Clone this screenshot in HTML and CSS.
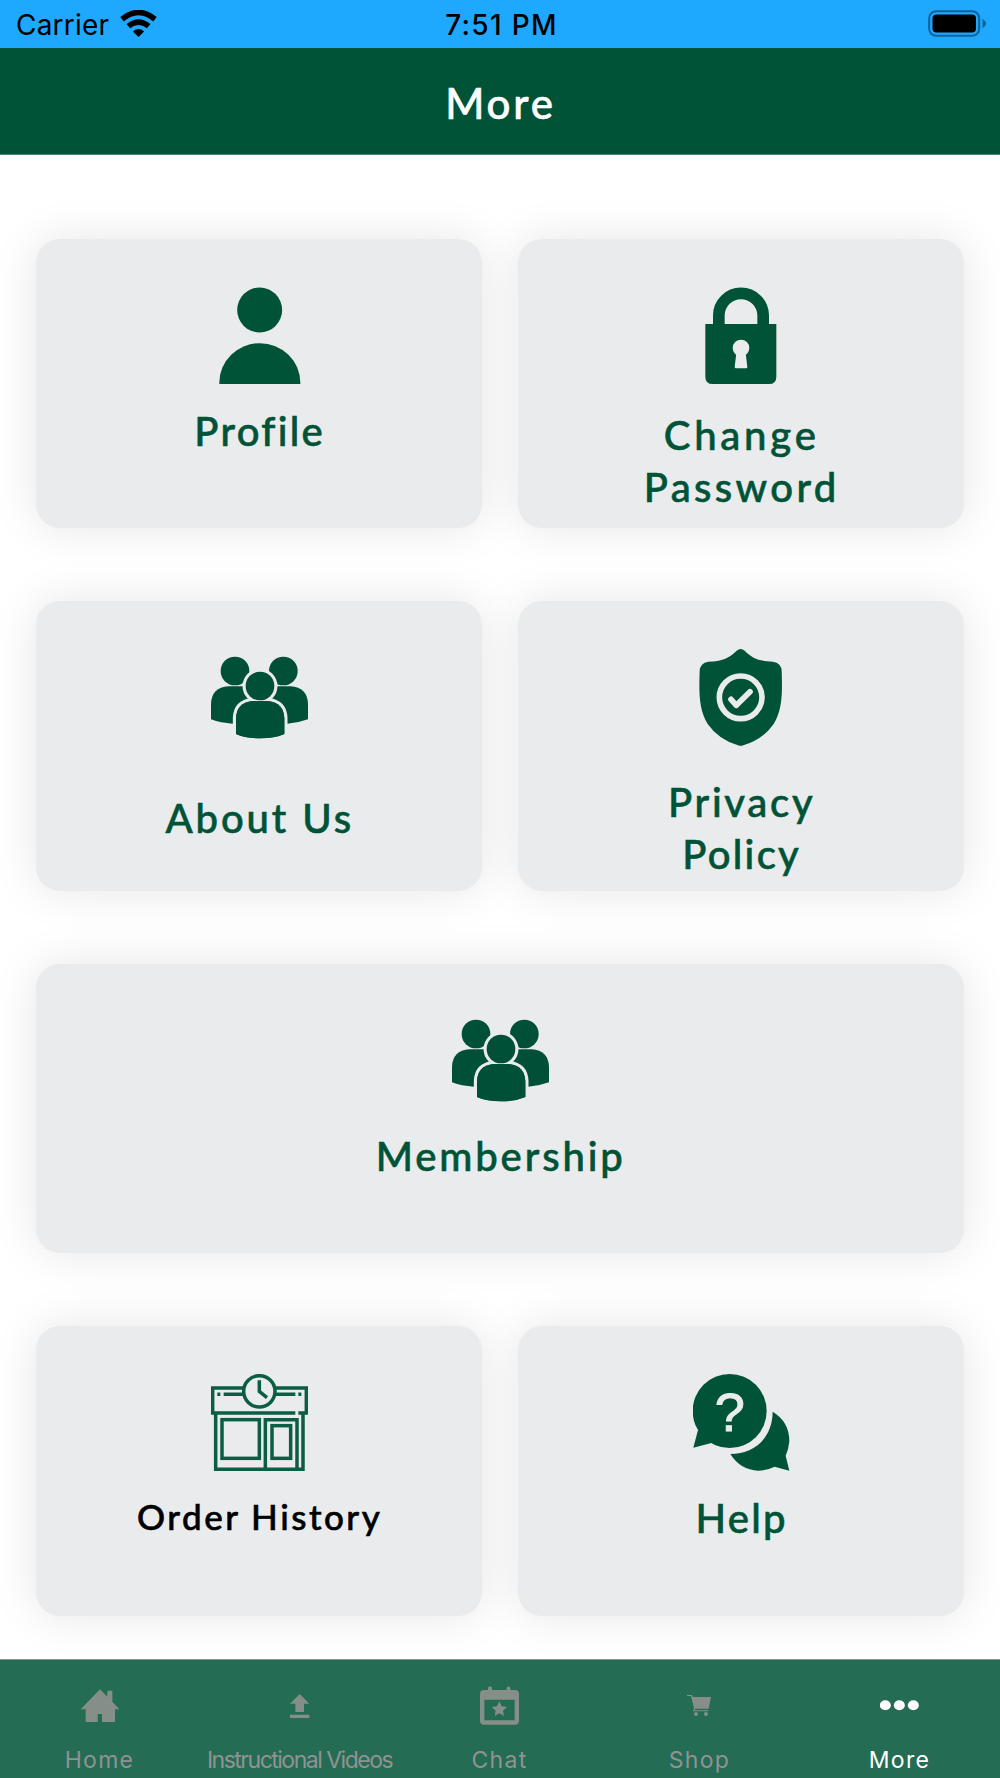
FILE: index.html
```html
<!DOCTYPE html>
<html lang="en">
<head>
    <meta charset="UTF-8">
    <meta name="viewport" content="width=device-width, initial-scale=1.0">
    <title>More</title>
    <link rel="stylesheet" href="styles.css">
</head>
<body>
    <!-- people icon, used on two cards -->
    <svg class="symbols" width="0" height="0">
        <symbol id="people" viewBox="0 0 291 291">
            <g fill="#005037">
                <circle cx="72" cy="66" r="43"/>
                <circle cx="217" cy="66" r="43"/>
                <path d="M52 112H100L130 150L65 224Q30 222 0 211V164Q2 116 52 112Z"/>
                <path d="M239 112H191L161 150L229 224Q261 222 291 211V164Q289 116 239 112Z"/>
            </g>
            <g fill="#005037" stroke="#e9ebec" stroke-width="19" paint-order="stroke">
                <path d="M75 255V207Q77 162 124 156H171Q218 162 220 207V255Q190 268 148 268Q105 268 75 255Z"/>
                <circle cx="147" cy="111" r="43"/>
            </g>
            <path fill="#005037" d="M75 255V207Q77 162 124 156H171Q218 162 220 207V255Q190 268 148 268Q105 268 75 255Z"/>
        </symbol>
    </svg>
    <div class="status">
        <div class="carrier">
            <span>Carrier</span>
            <svg class="wifi" viewBox="0 0 110 82">
                <g fill="none" stroke="#000" stroke-width="17">
                    <path d="M5 28Q55 -13 105 28"/>
                    <path d="M24 49Q55 24 86 49"/>
                </g>
                <path d="M38 65Q55 51 72 65L55 82Z"/>
            </svg>
        </div>
        <div class="time">7:51 PM</div>
        <div class="power">
            <svg class="battery" viewBox="0 0 59 28">
                <rect x="1.2" y="1.2" width="50" height="24.6" rx="7" fill="none" stroke="#0f6199" stroke-width="2"/>
                <rect x="4.5" y="4.5" width="43.5" height="18" rx="4"/>
                <path d="M54.5 9Q58 11 58 13.5Q58 16 54.5 18Z" fill="#0f6199"/>
            </svg>
        </div>
    </div>
    <div class="header">
        <h1>More</h1>
    </div>
    <div class="cards">
        <div class="card profile">
            <svg class="icon" viewBox="0 0 291 291" fill="#005337">
                <circle cx="146" cy="69" r="67.5"/>
                <path d="M25 291V287A121 118 0 0 1 268 287V291Z"/>
            </svg>
            <p>Profile</p>
        </div>
        <div class="card password">
            <svg class="icon" viewBox="0 0 291 291" fill="#005337">
                <path d="M77.500 115V85A66.500 66 0 0 1 210.500 85V115" fill="none" stroke="#005337" stroke-width="35"/>
                <path d="M37 111H250V269Q250 291 228 291H59Q37 291 37 269Z"/>
                <circle cx="144" cy="183" r="25" fill="#e9ebec"/>
                <path d="M130 199H158L163 240Q163 244 159 244H129Q125 244 125 240Z" fill="#e9ebec"/>
            </svg>
            <p><span class="first">Change</span><br>Password</p>
        </div>
        <div class="card about">
            <svg class="icon"><use href="#people"/></svg>
            <p>About Us</p>
        </div>
        <div class="card privacy">
            <svg class="icon" viewBox="0 0 291 291">
                <path fill="#005337" d="M131 5Q143 -5 155 5C180 29 197 36 240 38Q265 42 266 66C268 130 269 180 242 225Q209 272 151 289Q143 292 135 289Q77 272 44 225C17 180 18 130 20 66Q21 42 46 38C89 36 106 29 131 5Z"/>
                <circle cx="143" cy="145" r="64" fill="none" stroke="#e9ebec" stroke-width="17"/>
                <path d="M114 151L130 169L171 128" fill="none" stroke="#e9ebec" stroke-width="17" stroke-linecap="round" stroke-linejoin="round"/>
            </svg>
            <p><span class="first">Privacy</span><br>Policy</p>
        </div>
        <div class="card membership">
            <svg class="icon"><use href="#people"/></svg>
            <p>Membership</p>
        </div>
        <div class="card orders">
            <svg class="icon" viewBox="0 0 291 291" fill="none" stroke="#0b5e43" stroke-width="10.500">
                <path d="M98 42H5V117H253M192 42H286V117H262"/>
                <path d="M19 61H28M38 61H98M192 61H253M262 61H271"/>
                <circle cx="145" cy="52" r="47"/>
                <path d="M145 19V52L168 71"/>
                <path d="M14 117V286H276V117"/>
                <rect x="33" y="137" width="112" height="116"/>
                <path d="M163 286V137H258V286"/>
                <rect x="183" y="155" width="56" height="98"/>
            </svg>
            <p>Order History</p>
        </div>
        <div class="card help">
            <svg class="icon" viewBox="0 0 291 291" fill="#005337">
                <circle cx="110" cy="111" r="111"/>
                <path d="M15 168L1 221L55 207Z"/>
                <path d="M239 113Q289 143 289 202Q287 226 278 245L289 290L245 278Q220 290 196 290Q142 288 112 240C187 240 239 188 239 113Z"/>
                <text class="mark" x="110" y="170">?</text>
            </svg>
            <p>Help</p>
        </div>
    </div>
    <div class="tabs">
        <div class="tab home">
            <svg viewBox="0 0 120 120">
                <path d="M60 10L82 32V14H97V47L118 70H105V108H66V84H53V108H17V70H2Z"/>
            </svg>
            <span>Home</span>
        </div>
        <div class="tab videos">
            <svg viewBox="0 0 120 120">
                <path d="M59 24L88 53H72V78H46V53H30ZM30 86H88V96H30Z"/>
            </svg>
            <span>Instructional Videos</span>
        </div>
        <div class="tab chat">
            <svg viewBox="0 0 120 120">
                <path fill-rule="evenodd" d="M12 12H24V5Q30 -4 36 5V12H80V5Q85 -4 91 5V12H105Q117 12 117 24V104Q117 116 105 116H12Q0 116 0 104V24Q0 12 12 12ZM13 41V103H104V41Z"/>
                <path d="M58 46L65 61L81 63L69 74L72 90L58 82L44 90L47 74L35 63L51 61Z"/>
            </svg>
            <span>Chat</span>
        </div>
        <div class="tab shop">
            <svg viewBox="0 0 120 120">
                <path d="M21 27H36L39 33H93L86 68H46L44 73H85V76H39L42 67L33 30H21Z"/>
                <circle cx="48" cy="84" r="6"/>
                <circle cx="78" cy="84" r="6"/>
            </svg>
            <span>Shop</span>
        </div>
        <div class="tab more active">
            <svg viewBox="0 0 120 120">
                <ellipse cx="16" cy="58" rx="16.500" ry="15"/>
                <ellipse cx="58" cy="58" rx="16.500" ry="15"/>
                <ellipse cx="100" cy="58" rx="16.500" ry="15"/>
            </svg>
            <span>More</span>
        </div>
    </div>
</body>
</html>
```

FILE: styles.css
```css
* {
    box-sizing: border-box;
}
body {
    margin: 0;
    width: 1000px;
    height: 1778px;
    display: flex;
    flex-direction: column;
    overflow: hidden;
    background-color: #fff;
    font-family: Lato, sans-serif;
}
.symbols {
    position: absolute;
}
.status {
    display: flex;
    height: 48px;
    flex-shrink: 0;
    background-color: #1ea9ff;
    font-family: Inter, sans-serif;
    font-size: 28px;
    line-height: 34px;
    padding: 8px 13px 0 16px;
}
.carrier, .power {
    flex: 1;
    display: flex;
}
.carrier {
    letter-spacing: 0.2px;
}
.power {
    justify-content: flex-end;
}
.wifi {
    width: 37px;
    height: 27px;
    margin: 2px 0 0 11px;
}
.battery {
    width: 59px;
    height: 28px;
    margin-top: 2px;
}
.time {
    font-weight: 500;
    letter-spacing: 1.3px;
}
.header {
    height: 106px;
    flex-shrink: 0;
    background-color: #005337;
    box-shadow: 0 1px 0 #4d8773;
    text-align: center;
}
h1 {
    margin: 29px 0 0;
    padding-left: 1px;
    color: #fff;
    font-size: 42px;
    font-weight: 500;
    line-height: 52px;
    letter-spacing: 2.8px;
    -webkit-text-stroke: 0.6px #fff;
}
.cards {
    display: grid;
    grid-template-columns: 1fr 1fr;
    grid-auto-rows: 289.4px;
    gap: 73px 36.4px;
    padding: 85px 36px 0 36.4px;
    flex: 1;
}
.card {
    display: flex;
    flex-direction: column;
    align-items: center;
    padding-top: 48px;
    border-radius: 24px;
    background-color: #e9ebec;
    box-shadow: 0 0 46px rgba(0, 0, 0, 0.1);
}
.icon {
    width: 97px;
    height: 97px;
}
.card p {
    margin: 21px 0 0;
    padding-left: 1px;
    color: #005337;
    font-size: 40px;
    font-weight: 500;
    line-height: 52px;
    letter-spacing: 2.3px;
    text-align: center;
    white-space: nowrap;
    -webkit-text-stroke: 0.6px #005337;
}
.password p {
    margin-top: 25px;
    letter-spacing: 3.4px;
}
.password .first {
    letter-spacing: 3.8px;
}
.about p {
    margin-top: 45.5px;
    letter-spacing: 2.9px;
}
.privacy p {
    margin-top: 30px;
}
.privacy .first {
    letter-spacing: 2.7px;
}
.membership {
    grid-column: span 2;
}
.membership p {
    letter-spacing: 2.9px;
}
.card.orders p {
    margin-top: 19px;
    color: #000;
    font-size: 35px;
    letter-spacing: 2.5px;
    -webkit-text-stroke: 0.6px #000;
}
.mark {
    fill: #e9ebec;
    stroke: #e9ebec;
    stroke-width: 3px;
    font-family: "Liberation Sans", sans-serif;
    font-size: 162px;
    text-anchor: middle;
}
.tabs {
    display: flex;
    height: 119px;
    flex-shrink: 0;
    border-top: 1px solid #84968e;
    background-color: #246c53;
    font-family: Inter, sans-serif;
    position: relative;
}
.tab {
    width: 200px;
    display: flex;
    flex-direction: column;
    align-items: center;
    padding-top: 26px;
    color: #929292;
    fill: #858e88;
}
.tab svg {
    width: 40px;
    height: 40px;
}
.tab span {
    margin: 20px 1px 0 0;
    font-size: 23px;
    line-height: 28px;
    letter-spacing: 1.3px;
    white-space: nowrap;
}
.videos span {
    letter-spacing: -1.5px;
}
.active {
    color: #fff;
    fill: #fff;
}
```
